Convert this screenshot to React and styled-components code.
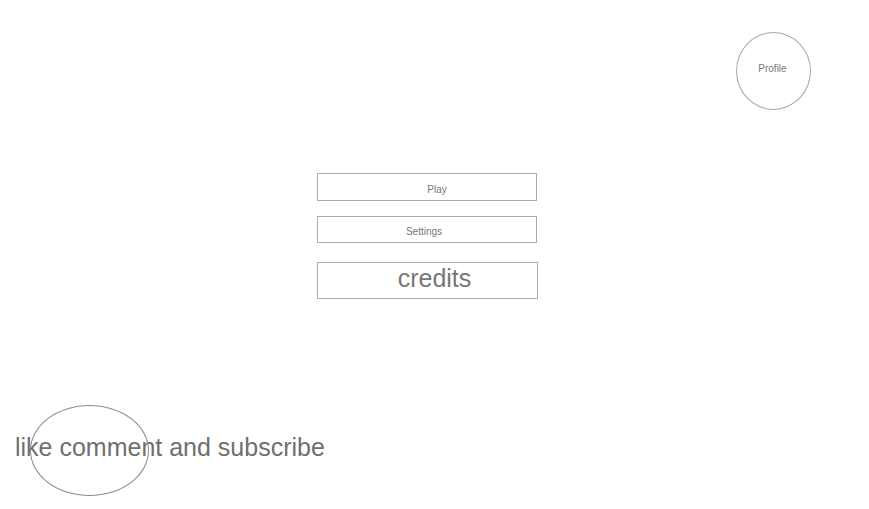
import styled, { createGlobalStyle } from "styled-components";

const GlobalStyle = createGlobalStyle`
  body {
    margin: 0;
    background: #ffffff;
    font-family: "Liberation Sans", Arial, sans-serif;
  }
`;

const Page = styled.div`
  width: 869px;
  height: 509px;
  overflow: hidden;
  display: flex;
  flex-direction: column;
`;

const TopBar = styled.div`
  display: flex;
  justify-content: flex-end;
  padding: 32px 58px 0 0;
`;

const ProfileCircle = styled.div`
  width: 75px;
  height: 78px;
  border: 1px solid #a8a8a8;
  border-radius: 50%;
  display: flex;
  align-items: center;
  justify-content: center;
  font-size: 10px;
  color: #7a7a7a;
  box-sizing: border-box;
  padding: 0 2px 6px 0;
`;

const Menu = styled.div`
  display: flex;
  flex-direction: column;
  margin: 63px 0 0 317px;
`;

const MenuButton = styled.div`
  width: ${(p) => p.$w}px;
  height: ${(p) => p.$h}px;
  margin-bottom: ${(p) => p.$mb}px;
  box-sizing: border-box;
  border: 1px solid #ababab;
  display: flex;
  align-items: center;
  justify-content: center;
  padding: ${(p) => p.$pad};
  font-size: ${(p) => p.$size}px;
  color: #777777;
`;

const Label = styled.span`
  margin-top: ${(p) => p.$lift || 0}px;
`;

const Footer = styled.div`
  position: relative;
  margin-top: 106px;
  height: 90px;
  display: flex;
  align-items: center;
  padding-left: 15px;
`;

const FooterText = styled.span`
  font-size: 25px;
  color: #6f6f6f;
  margin-top: -5px;
`;

const Ellipse = styled.div`
  position: absolute;
  left: 30px;
  top: 0;
  width: 119px;
  height: 91px;
  box-sizing: border-box;
  border: 1px solid #8a8a8a;
  border-radius: 50%;
`;

export default function App() {
  return (
    <Page>
      <GlobalStyle />
      <TopBar>
        <ProfileCircle>Profile</ProfileCircle>
      </TopBar>
      <Menu>
        <MenuButton $w={220} $h={28} $mb={15} $pad="4px 0 0 20px" $size={10}>
          <Label>Play</Label>
        </MenuButton>
        <MenuButton $w={220} $h={27} $mb={19} $pad="4px 6px 0 0" $size={10}>
          <Label>Settings</Label>
        </MenuButton>
        <MenuButton $w={221} $h={37} $mb={0} $pad="0 0 0 14px" $size={25}>
          <Label $lift={-5}>credits</Label>
        </MenuButton>
      </Menu>
      <Footer>
        <FooterText>like comment and subscribe</FooterText>
        <Ellipse />
      </Footer>
    </Page>
  );
}
